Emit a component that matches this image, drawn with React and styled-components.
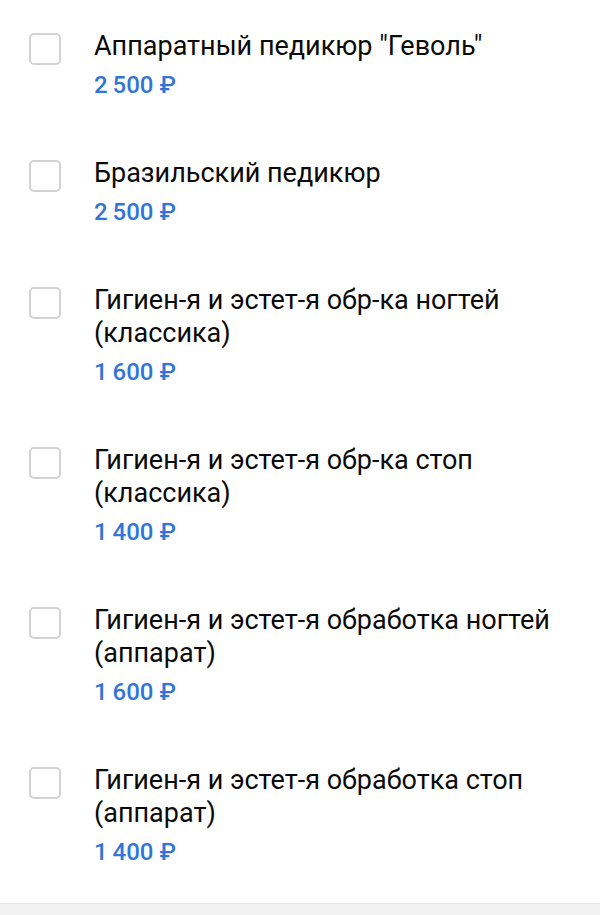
import React from 'react'
import styled, { createGlobalStyle } from 'styled-components';

const services = [
    { title: 'Аппаратный педикюр "Геволь"', price: '2 500' },
    { title: 'Бразильский педикюр', price: '2 500' },
    { title: 'Гигиен-я и эстет-я обр-ка ногтей (классика)', price: '1 600' },
    { title: 'Гигиен-я и эстет-я обр-ка стоп (классика)', price: '1 400' },
    { title: 'Гигиен-я и эстет-я обработка ногтей (аппарат)', price: '1 600' },
    { title: 'Гигиен-я и эстет-я обработка стоп (аппарат)', price: '1 400' },
];

export default () =>
    <Page>
        <Global />
        <List>
            {services.map(s =>
                <Item key={s.title}>
                    <Box />
                    <Info>
                        <Title>{s.title}</Title>
                        <Price>{s.price.replace(' ', '\u2009')}{'\u00a0₽'}</Price>
                    </Info>
                </Item>
            )}
        </List>
        <Footer />
    </Page>

const Global = createGlobalStyle`
    html, body {
        margin: 0;
        padding: 0;
        background: #fff;
    }
    body {
        font-family: Roboto, "Noto Sans", sans-serif;
    }
`;

const Page = styled.div`
    width: 600px;
    height: 915px;
    display: flex;
    flex-direction: column;
    overflow: hidden;
`;

const List = styled.div`
    flex: 1;
    display: flex;
    flex-direction: column;
    gap: 57px;
    padding: 30px 0 0 29px;
`;

const Item = styled.label`
    display: flex;
    align-items: flex-start;
    gap: 33px;
`;

const Box = styled.span`
    flex: none;
    box-sizing: border-box;
    width: 32px;
    height: 32px;
    margin-top: 3px;
    border: 2.5px solid #d2d2d2;
    border-radius: 5px;
`;

const Info = styled.div`
    display: flex;
    flex-direction: column;
    gap: 7px;
`;

const Title = styled.div`
    font-size: 27px;
    line-height: 33px;
    color: #0a0a0a;
    padding-right: 30px;
`;

const Price = styled.div`
    font-size: 24px;
    line-height: 30px;
    font-weight: 500;
    color: #3275d6;
`;

const Footer = styled.div`
    flex: none;
    height: 11px;
    background: #f2f2f2;
    border-top: 1px solid #e6e6e6;
`;
